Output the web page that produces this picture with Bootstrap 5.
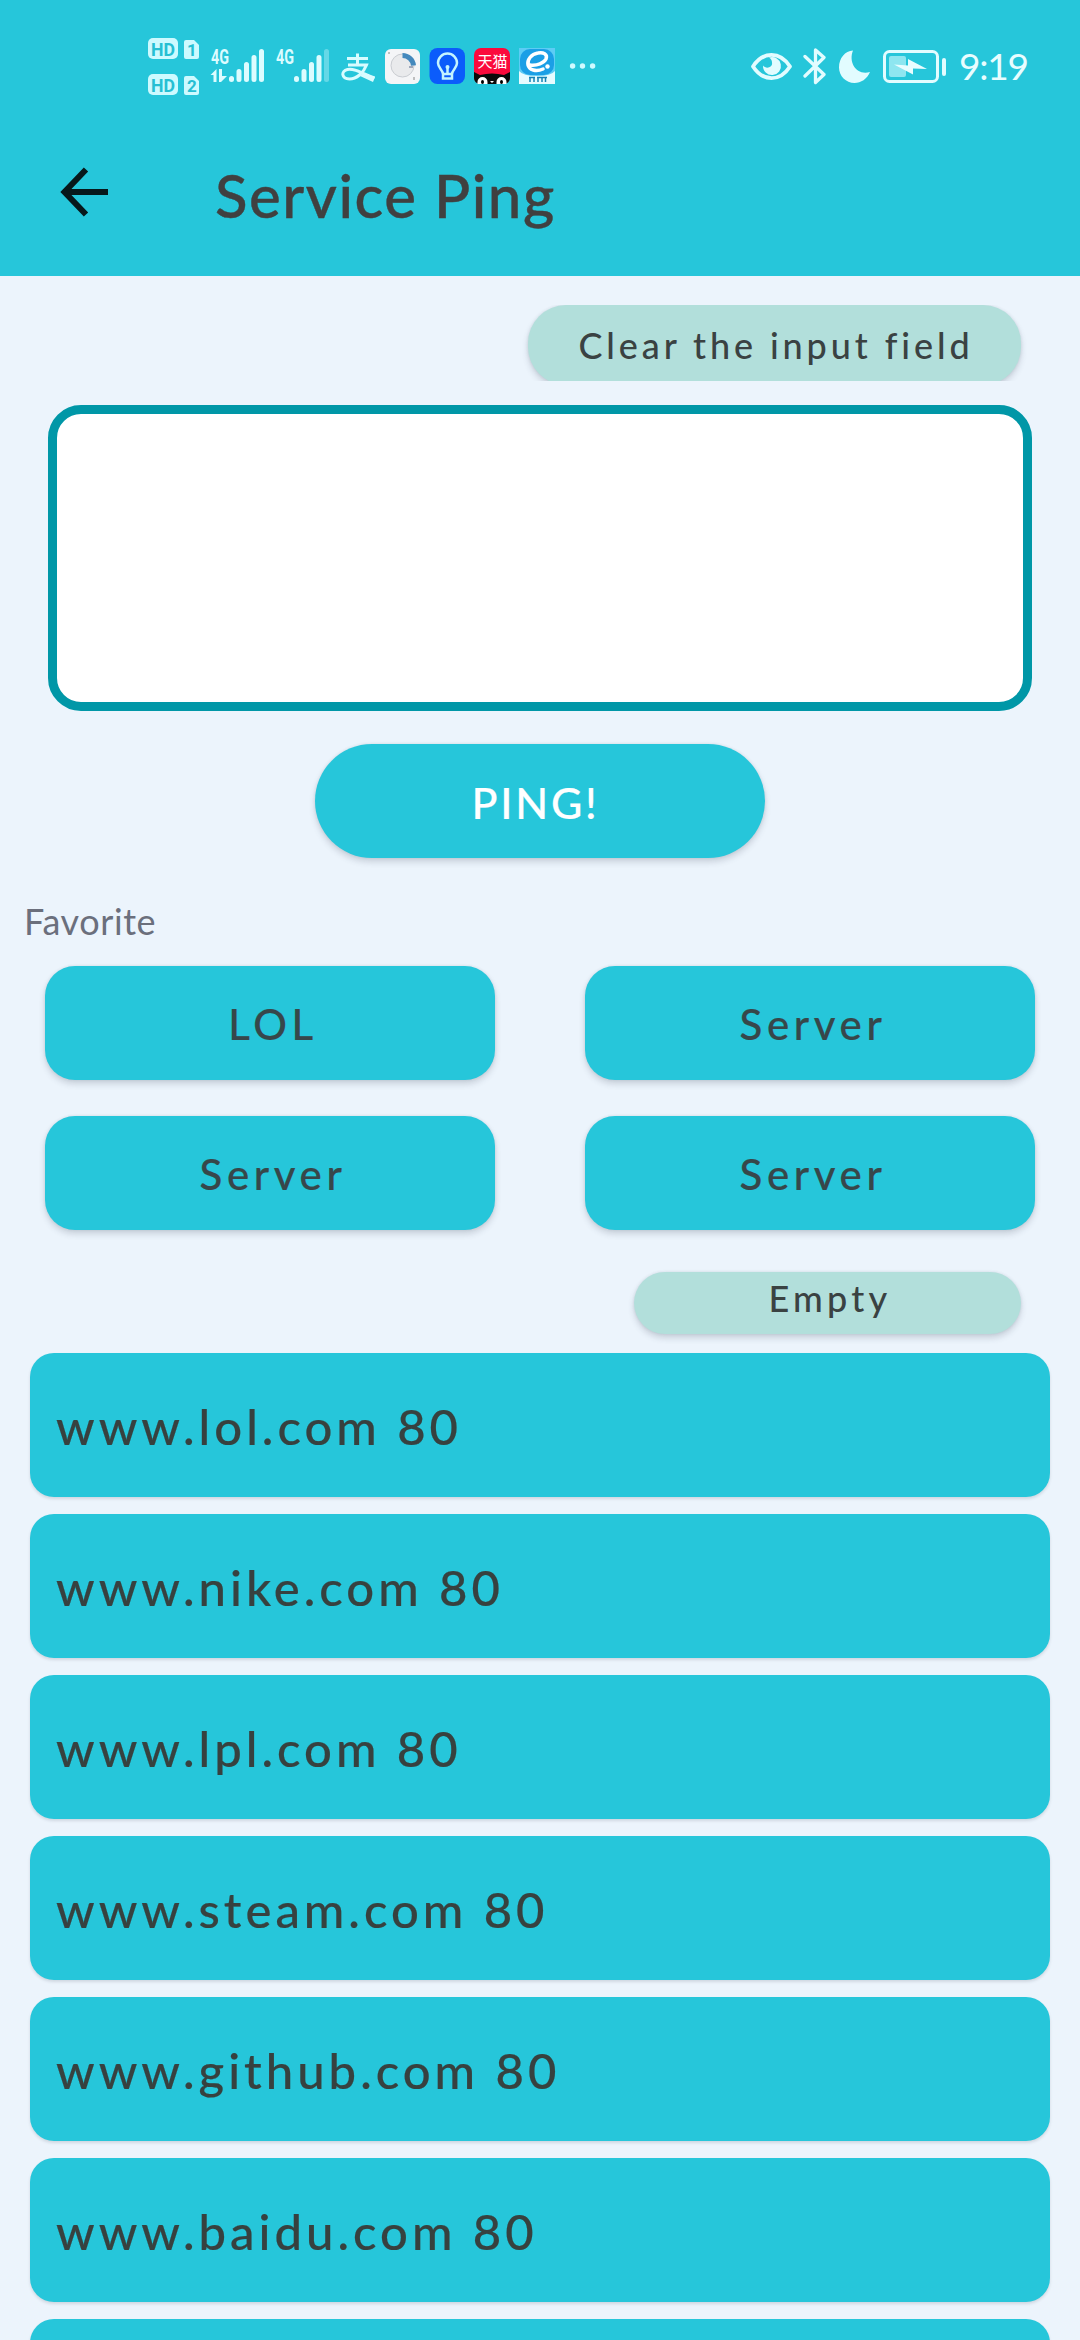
<!DOCTYPE html>
<html lang="en">
<head>
<meta charset="utf-8">
<meta name="viewport" content="width=device-width, initial-scale=1">
<title>Service Ping</title>
<link href="https://cdn.jsdelivr.net/npm/bootstrap@5.3.0/dist/css/bootstrap.min.css" rel="stylesheet">
<style>
  body { background: #ecf4fc; font-family: Lato, "Noto Sans CJK SC", sans-serif; font-weight: 500; color: #404040; line-height: 1.2; }
  .screen { width: 1080px; height: 2340px; }
  .screen > * { flex: none; }
  .app-head { background: #26c6da; height: 276px; }
  .status-bar { height: 108px; padding: 37px 52px 0 148px; }
  .status-bar svg { height: 60px; flex: none; display: block; }
  .clock { font-size: 37px; line-height: 58px; height: 60px; letter-spacing: -1.2px; color: #e8fdff; width: 70px; font-weight: 400; padding: 0 0 0 1px; }
  .title-bar { height: 168px; padding-left: 60px; }
  .title-bar h1 { font-size: 60px; font-weight: 500; letter-spacing: 1.5px; margin: 5px 0 0 105px; line-height: 1.2; -webkit-text-stroke: .4px; }
  .btn-app { --bs-btn-padding-x: 0; --bs-btn-padding-y: 0; --bs-btn-border-width: 0; --bs-btn-bg: #26c6da; --bs-btn-hover-bg: #26c6da;
    --bs-btn-color: #37474a; --bs-btn-font-weight: 500; --bs-btn-font-size: 42px; --bs-btn-line-height: 1.2;
    height: 114px; letter-spacing: 4.6px; box-shadow: 0 4px 6px rgba(60,70,90,.2), 0 0 3px rgba(60,70,90,.12); -webkit-text-stroke: .2px; }
  .btn-soft { --bs-btn-bg: #b2dfdb; --bs-btn-hover-bg: #b2dfdb; --bs-btn-color: #3a4242; --bs-btn-font-size: 36px; -webkit-text-stroke: 0; }
  .clear-wrap { height: 76px; margin: 29px 53px 0 0; padding: 0 6px; overflow: hidden; }
  .btn-clear { width: 493px; height: 80px; border-radius: 38px; letter-spacing: 3.9px; padding: 2px 0 0 3px; }
  .input-box { margin: 24px 48px 0; height: 306px; border: 9px solid #0097a7; border-radius: 33px; background: #fff; resize: none; box-shadow: none !important; width: auto; }
  .btn-ping { width: 450px; margin-top: 33px; border-radius: 57px; --bs-btn-color: #fff; --bs-btn-font-size: 43px; letter-spacing: 2.8px; padding: 3px 9px 0 0; }
  .fav-label { margin: 41px 0 0 24px; font-size: 36px; line-height: 44px; color: #6b6f7c; font-weight: 400; letter-spacing: .6px; height: 67px; }
  .fav-grid { padding: 0 45px; display: grid; grid-template-columns: 450px 450px; column-gap: 90px; row-gap: 36px; }
  .fav-grid .btn { border-radius: 30px; padding: 3px 0 0 6px; }
  .btn-empty { width: 387px; height: 62px; border-radius: 31px; margin: 42px 59px 0 0; padding: 0 0 8px 5px; letter-spacing: 4.2px; }
  .hosts { margin: 19px 30px 0; gap: 17px; }
  .host { height: 144px; flex: none; border: 0; border-radius: 24px !important; background: #26c6da; padding: 2px 0 0 26px; font-size: 49px; letter-spacing: 4px; color: #37413f; box-shadow: 0 2px 3px rgba(60,70,90,.16); -webkit-text-stroke: .2px; }
</style>
</head>
<body>
<main class="screen overflow-hidden d-flex flex-column">
  <header class="app-head">
    <div class="status-bar d-flex">
      <svg width="62" viewBox="148 37 62 60" fill="#cdfaff" font-family="Roboto" font-weight="700">
        <rect x="148" y="38" width="30" height="21" rx="5"/><path d="M186 40h8l5 5v12a2 2 0 0 1-2 2h-11a2 2 0 0 1-2-2v-15a2 2 0 0 1 2-2z"/>
        <rect x="148" y="74" width="30" height="21" rx="5"/><path d="M186 76h8l5 5v12a2 2 0 0 1-2 2h-11a2 2 0 0 1-2-2v-15a2 2 0 0 1 2-2z"/>
        <g fill="#26bfd3" font-size="19"><text x="151" y="55.5" textLength="24" lengthAdjust="spacingAndGlyphs">HD</text><text x="151" y="91.500" textLength="24" lengthAdjust="spacingAndGlyphs">HD</text><text x="187" y="56" font-size="17">1</text><text x="187" y="92" font-size="17">2</text></g>
      </svg>
      <svg width="65" viewBox="210 37 65 60" fill="#dcfcff" font-family="Roboto" font-weight="700">
        <text x="211" y="64" font-size="21" textLength="18" lengthAdjust="spacingAndGlyphs">4G</text>
        <path d="M210.500 75l6-6v13h-3v-7zM219 69h3v7h5l-6 6h-2z"/>
        <g stroke="#dcfcff" stroke-width="5" stroke-linecap="round"><path d="M231.500 78.500v1M239 71.500v8M246.500 64.500v15M254 57.500v22M261.500 51.500v28"/></g>
      </svg>
      <svg width="66" viewBox="275 37 66 60" fill="#dcfcff" font-family="Roboto" font-weight="700">
        <text x="276" y="64" font-size="21" textLength="18" lengthAdjust="spacingAndGlyphs">4G</text>
        <g stroke="#dcfcff" stroke-width="5" stroke-linecap="round"><path d="M296.500 78.500v1M304 71.500v8M311.500 64.500v15M319 57.500v22"/><path d="M326.500 51.500v28" opacity=".35"/></g>
      </svg>
      <svg width="43" viewBox="341 37 43 60" fill="none" stroke="#d8fcff" stroke-width="3">
        <path d="M347 58.500h21M357.500 53.500v11M348 65h18.500c-3 8-10 14-17 14-8 0-9-8-2-9.500 7-1.500 14 3.500 27 8.500"/><path d="M363 73l12 4-2 5-13-6z" fill="#d8fcff" stroke="none"/>
      </svg>
      <svg width="45" viewBox="384 37 45 60">
        <rect x="385" y="49" width="35" height="35" rx="6" fill="#f4f5f7"/><circle cx="402.500" cy="65.500" r="11.500" fill="#e9eaec" stroke="#c9ccd1"/><path d="M402.500 55.500A11 11 0 0 1 413.500 65.500" fill="none" stroke="#4489bd" stroke-width="5"/><path d="M409 67h4" stroke="#568" stroke-width="1"/><path d="M389 52v2M414 77v3" stroke="#888"/>
      </svg>
      <svg width="45" viewBox="429 37 45 60" fill="none" stroke="#c4f4ff" stroke-width="2.500">
        <rect x="429.500" y="48" width="35.500" height="36" rx="8" fill="#0b5cfb" stroke="none"/><path d="M443 74c0-4-5-6-5-11a9.500 9.500 0 0 1 19 0c0 5-5 7-5 11v4.500h-9zM443 74h9M447.500 67v7"/><circle cx="447.500" cy="67" r="2" fill="#c4f4ff" stroke="none"/>
      </svg>
      <svg width="45" viewBox="474 37 45 60">
        <rect x="474" y="48" width="36" height="36" rx="7" fill="#fb0a3c"/><path d="M474 72l6 3q12-3 24 0l6-3v6a6 6 0 0 1-6 6h-24a6 6 0 0 1-6-6z" fill="#0a0a0a"/><text x="477.500" y="67" font-size="15" fill="#fff" font-family="Noto Sans CJK SC" font-weight="400">天猫</text><path d="M477.500 84v-2a5 5 0 0 1 10 0v2M496.500 84v-2a5 5 0 0 1 10 0v2z" fill="#fff"/><ellipse cx="482.500" cy="82" rx="1.500" ry="2"/><ellipse cx="501.500" cy="82" rx="1.500" ry="2"/><path d="M490 81h4l-2 2z" fill="#fff"/>
      </svg>
      <svg width="50" viewBox="519 37 50 60">
        <path d="M519 48h36v36h-36z" fill="#5dccf5"/><rect x="520" y="49" width="34" height="26" rx="10" fill="#1b9fe6"/><path d="M519 71q4 5 18 5t18-5v13h-36z" fill="#e6fbff"/><path d="M530 65c7 1 14-2 16-6 2-5-3-7-8-6-7 1-11 7-10 12 1 5 8 7 15 4" fill="none" stroke="#fff" stroke-width="3.500" stroke-linecap="round"/><circle cx="547.500" cy="66.500" r="2.200" fill="#fff"/><path d="M530 77v5M534 77v5M538 77v5M542 77v5M545.500 77v5M529 77.500h6M537 77.500h10" stroke="#1682b5" stroke-width="1.500"/>
      </svg>
      <svg width="28" viewBox="569 37 28 60" fill="#cffaff"><circle cx="572.600" cy="66" r="2.700"/><circle cx="582.500" cy="66" r="2.700"/><circle cx="592.600" cy="66" r="2.700"/></svg>
      <svg class="ms-auto" width="53" viewBox="750 37 53 60"><path d="M753 66.500C763 51 780 51 790 66.500C780 82 763 82 753 66.500z" fill="none" stroke="#e2fcff" stroke-width="3.800" stroke-linejoin="round"/><path d="M769 57.500a9 9 0 1 1-6 8c3 4 10 2 9-3 0-2-1-4-3-5z" fill="#e2fcff"/></svg>
      <svg width="35" viewBox="803 37 35 60" fill="none" stroke="#e2fcff" stroke-width="3.300" stroke-linejoin="round" stroke-linecap="round"><path d="M805 56.500L824 74.500 815.500 82.500V50L824 57.500 805 76"/></svg>
      <svg width="44" viewBox="838 37 44 60" fill="#e2fcff"><path d="M853 50.500C848 63 857 76 870 72C867 79 861 83 854.500 83C846 83 839 76 839 67.500C839 58 845 51 853 50.500z"/></svg>
      <svg width="76" viewBox="882 37 76 60"><rect x="884.500" y="51.500" width="53" height="30" rx="5" fill="none" stroke="#e2fcff" stroke-width="3"/><rect x="889" y="56" width="17" height="21" rx="2" fill="#8ee6f0"/><path d="M894 64.500l14 1V59l19 10-14-.500v6z" fill="#e9fdff"/><rect x="942" y="58" width="4" height="18" rx="2" fill="#e2fcff"/></svg>
      <span class="clock text-nowrap">9:19</span>
    </div>
    <div class="title-bar d-flex align-items-center">
      <svg width="50" height="50" viewBox="0 0 50 50" fill="none" stroke="#07181b" stroke-width="6"><path d="M26 2.500L4.500 25 26 47.500M4.500 25H48"/></svg>
      <h1>Service Ping</h1>
    </div>
  </header>

  <div class="clear-wrap align-self-end"><button type="button" class="btn btn-app btn-soft btn-clear">Clear the input field</button></div>
  <textarea class="form-control input-box" aria-label="Host"></textarea>
  <button type="button" class="btn btn-app btn-ping align-self-center">PING!</button>

  <div class="fav-label">Favorite</div>
  <div class="fav-grid">
    <button type="button" class="btn btn-app">LOL</button>
    <button type="button" class="btn btn-app">Server</button>
    <button type="button" class="btn btn-app">Server</button>
    <button type="button" class="btn btn-app">Server</button>
  </div>
  <button type="button" class="btn btn-app btn-soft btn-empty align-self-end">Empty</button>

  <div class="hosts list-group">
    <div class="host list-group-item d-flex align-items-center">www.lol.com 80</div>
    <div class="host list-group-item d-flex align-items-center">www.nike.com 80</div>
    <div class="host list-group-item d-flex align-items-center">www.lpl.com 80</div>
    <div class="host list-group-item d-flex align-items-center">www.steam.com 80</div>
    <div class="host list-group-item d-flex align-items-center">www.github.com 80</div>
    <div class="host list-group-item d-flex align-items-center">www.baidu.com 80</div>
    <div class="host list-group-item"></div>
  </div>
</main>
<script src="https://cdn.jsdelivr.net/npm/bootstrap@5.3.0/dist/js/bootstrap.bundle.min.js"></script>
</body>
</html>
